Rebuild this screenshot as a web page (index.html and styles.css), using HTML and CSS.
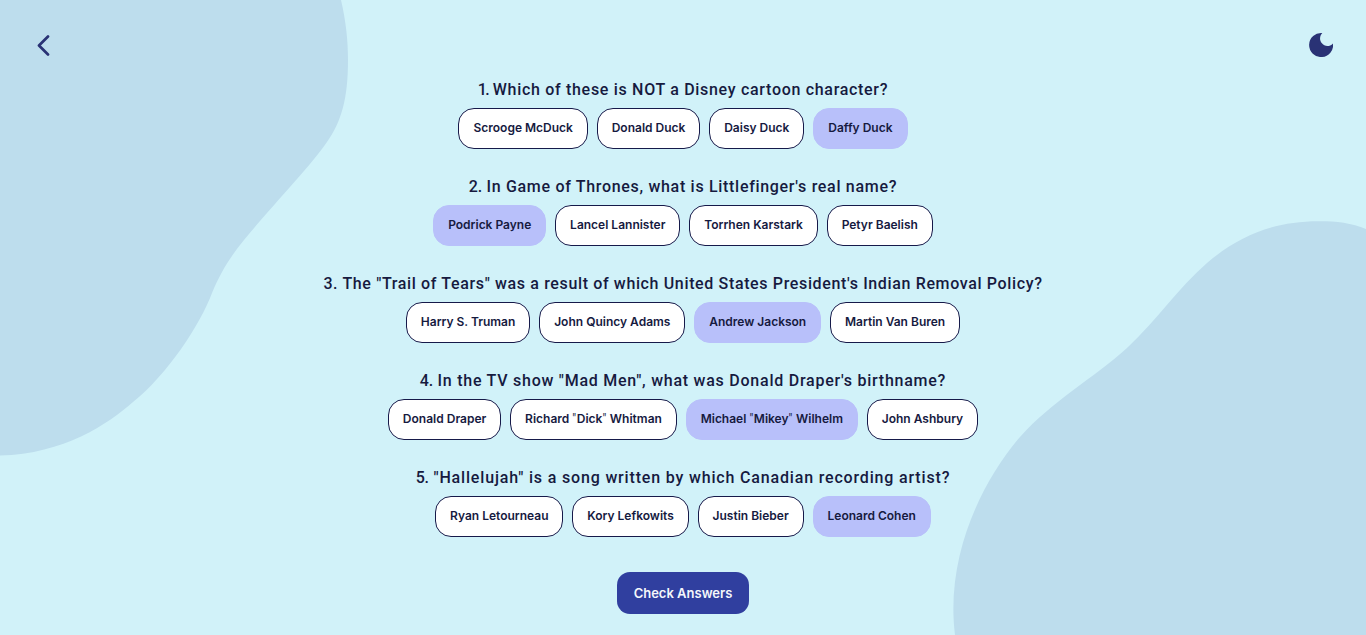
FILE: index.html
```html
<!DOCTYPE html>
<html lang="en">
<head>
<meta charset="utf-8">
<title>Quizzical</title>
<link rel="stylesheet" href="styles.css">
</head>
<body>
<svg class="backdrop" viewBox="0 0 1366 635" aria-hidden="true">
  <path d="M0 0H341C346 22 348 40 348 60C348 100 341 122 327 142C310 167 270 208 244 240C228 260 221 272 212 293C200 325 167 375 133 402C108 424 64 454 0 455.500Z"/>
  <path d="M1366 229C1352 223 1336 221.300 1320 221.300C1275 221 1240 235 1207 263C1178 288 1158 319 1127 348C1094 378 1052 401 1020 437C983 480 945 555 955 635H1366Z"/>
</svg>
<div class="page">
  <header class="topbar">
    <button class="icon-button" aria-label="Back"><svg class="back-icon" viewBox="0 0 14 22"><path d="M12 1.500L3 10.500l9 9"/></svg></button>
    <button class="icon-button" aria-label="Dark mode"><svg class="moon-icon" viewBox="0 0 24 24"><path d="M13.300 .1C10.700 2.800 10.200 7 12.700 10.100C15.500 13.600 20.300 14.300 24 10.400A12 12 0 1 1 13.300 .1Z"/></svg></button>
  </header>
  <main class="quiz">
    <section class="question">
      <h2 class="prompt prompt-first"><span class="number">1.</span> Which of these is NOT a Disney cartoon character?</h2>
      <div class="answers"><button class="answer">Scrooge McDuck</button><button class="answer">Donald Duck</button><button class="answer">Daisy Duck</button><button class="answer selected">Daffy Duck</button></div>
    </section>
    <section class="question">
      <h2 class="prompt"><span class="number">2.</span> In Game of Thrones, what is Littlefinger's real name?</h2>
      <div class="answers"><button class="answer selected">Podrick Payne</button><button class="answer">Lancel Lannister</button><button class="answer">Torrhen Karstark</button><button class="answer">Petyr Baelish</button></div>
    </section>
    <section class="question">
      <h2 class="prompt prompt-long">3. The "Trail of Tears" was a result of which United States President's Indian Removal Policy?</h2>
      <div class="answers"><button class="answer">Harry S. Truman</button><button class="answer">John Quincy Adams</button><button class="answer selected">Andrew Jackson</button><button class="answer">Martin Van Buren</button></div>
    </section>
    <section class="question">
      <h2 class="prompt prompt-wide"><span class="number">4.</span> In the TV show "Mad Men", what was Donald Draper's birthname?</h2>
      <div class="answers"><button class="answer">Donald Draper</button><button class="answer">Richard <span class="quote">"</span>Dick<span class="quote">"</span> Whitman</button><button class="answer selected">Michael <span class="quote">"</span>Mikey<span class="quote">"</span> Wilhelm</button><button class="answer">John Ashbury</button></div>
    </section>
    <section class="question">
      <h2 class="prompt prompt-wider"><span class="number">5.</span> "Hallelujah" is a song written by which Canadian recording artist?</h2>
      <div class="answers"><button class="answer">Ryan Letourneau</button><button class="answer">Kory Lefkowits</button><button class="answer">Justin Bieber</button><button class="answer selected">Leonard Cohen</button></div>
    </section>
    <button class="check">Check Answers</button>
  </main>
</div>
</body>
</html>
```
FILE: styles.css
```css
* { box-sizing: border-box; }
body {
  margin: 0;
  background: #d1f2f9;
  color: #161a3f;
  font-family: Inter, "Liberation Sans", sans-serif;
  overflow: hidden;
}
button { font-family: inherit; cursor: pointer; }
.backdrop {
  position: absolute;
  top: 0;
  left: 0;
  width: 1366px;
  height: 635px;
  fill: #bddded;
  z-index: -1;
}
.page { height: 635px; }
.topbar {
  display: flex;
  justify-content: space-between;
  align-items: center;
  height: 80px;
  padding: 10px 33px 0 36px;
}
.icon-button { display: flex; padding: 0; border: 0; background: none; }
.back-icon { width: 14px; height: 22px; margin-top: 1px; fill: none; stroke: #293275; stroke-width: 2.7; stroke-linecap: round; stroke-linejoin: round; }
.moon-icon { width: 24px; height: 24px; fill: #293275; }
.quiz { display: flex; flex-direction: column; align-items: center; }
.question { display: flex; flex-direction: column; align-items: center; height: 97px; }
.prompt {
  margin: 0 0 8px;
  font-family: Roboto, sans-serif;
  font-size: 16px;
  line-height: 20px;
  font-weight: 500;
  letter-spacing: 0.69px;
  white-space: nowrap;
}
.prompt-long { letter-spacing: 0.64px; }
.prompt-wide { letter-spacing: 0.75px; }
.prompt-wider { letter-spacing: 0.83px; }
.number { letter-spacing: -0.3px; }
.prompt-first .number { letter-spacing: -1.6px; }
.answers { display: flex; gap: 8.8px; }
.answer {
  height: 41px;
  padding: 0 14px 2px;
  border: 1px solid #161a4a;
  border-radius: 16px;
  background: #fff;
  color: #161a3f;
  font-size: 12px;
  font-weight: 600;
  white-space: nowrap;
}
.answer.selected { background: #b8c0fa; border-color: #b8c0fa; }
.quote { font-family: Roboto, sans-serif; font-weight: 400; letter-spacing: 0.6px; }
.check {
  width: 132px;
  height: 42px;
  margin-top: 7px;
  padding: 0;
  border: 0;
  border-radius: 13px;
  background: #303f9f;
  color: #f5f7fb;
  font-size: 13px;
  font-weight: 600;
}
```
